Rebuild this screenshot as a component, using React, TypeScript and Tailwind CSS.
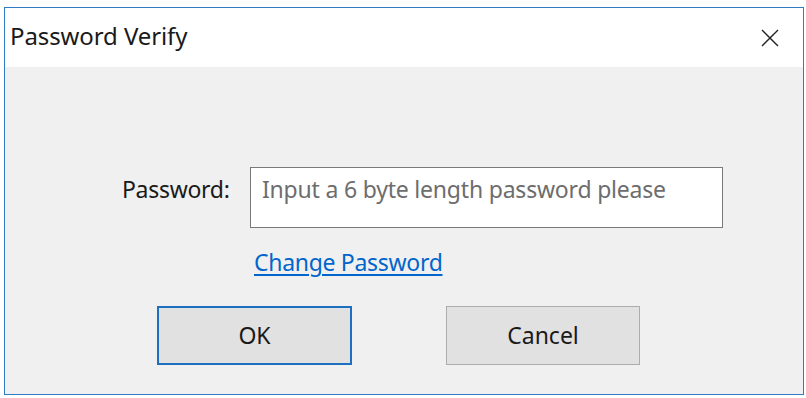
import React from "react";

export default function App() {
  const font = { fontFamily: '"Noto Sans", "Open Sans", sans-serif' };
  return (
    <div className="w-[806px] h-[398px] bg-white pt-[7px] pl-[4px]" style={font}>
      <div className="w-[800px] h-[388px] border border-[#2f7bc4] flex flex-col">
        <div className="h-[59px] bg-white flex items-center justify-between pl-[5px] pr-[24px]">
          <span className="text-[24px] leading-[30px] text-[#1a1a1a] tracking-[-0.1px] -mt-[3px]">Password Verify</span>
          <svg width="18" height="18" viewBox="0 0 18 18" className="mt-[1px]">
            <path d="M1 1 L17 17 M17 1 L1 17" stroke="#222" strokeWidth="1.4" fill="none" />
          </svg>
        </div>
        <div className="flex-1 bg-[#f0f0f0] flex flex-col">
          <div className="flex items-start mt-[100px] pl-[117px]">
            <span className="text-[23px] leading-[30px] text-[#1a1a1a] w-[128px] tracking-[-0.3px] mt-[7px]">Password:</span>
            <div className="w-[473px] h-[61px] bg-white border border-[#7a7a7a] pl-[11px] pt-[6px]">
              <span className="text-[23px] leading-[30px] text-[#6d6d6d] tracking-[-0.2px]">Input a 6 byte length password please</span>
            </div>
          </div>
          <div className="pl-[249px] mt-[19px]">
            <a className="text-[23px] leading-[30px] text-[#0066cc] underline underline-offset-[3px] tracking-[-0.3px]">Change Password</a>
          </div>
          <div className="flex pl-[152px] mt-[29px] gap-[94px]">
            <button className="w-[195px] h-[59px] bg-[#e1e1e1] border-2 border-[#1e6fc0] text-[23px] text-[#1a1a1a]">OK</button>
            <button className="w-[194px] h-[59px] bg-[#e1e1e1] border border-[#adadad] text-[23px] text-[#1a1a1a]">Cancel</button>
          </div>
        </div>
      </div>
    </div>
  );
}
